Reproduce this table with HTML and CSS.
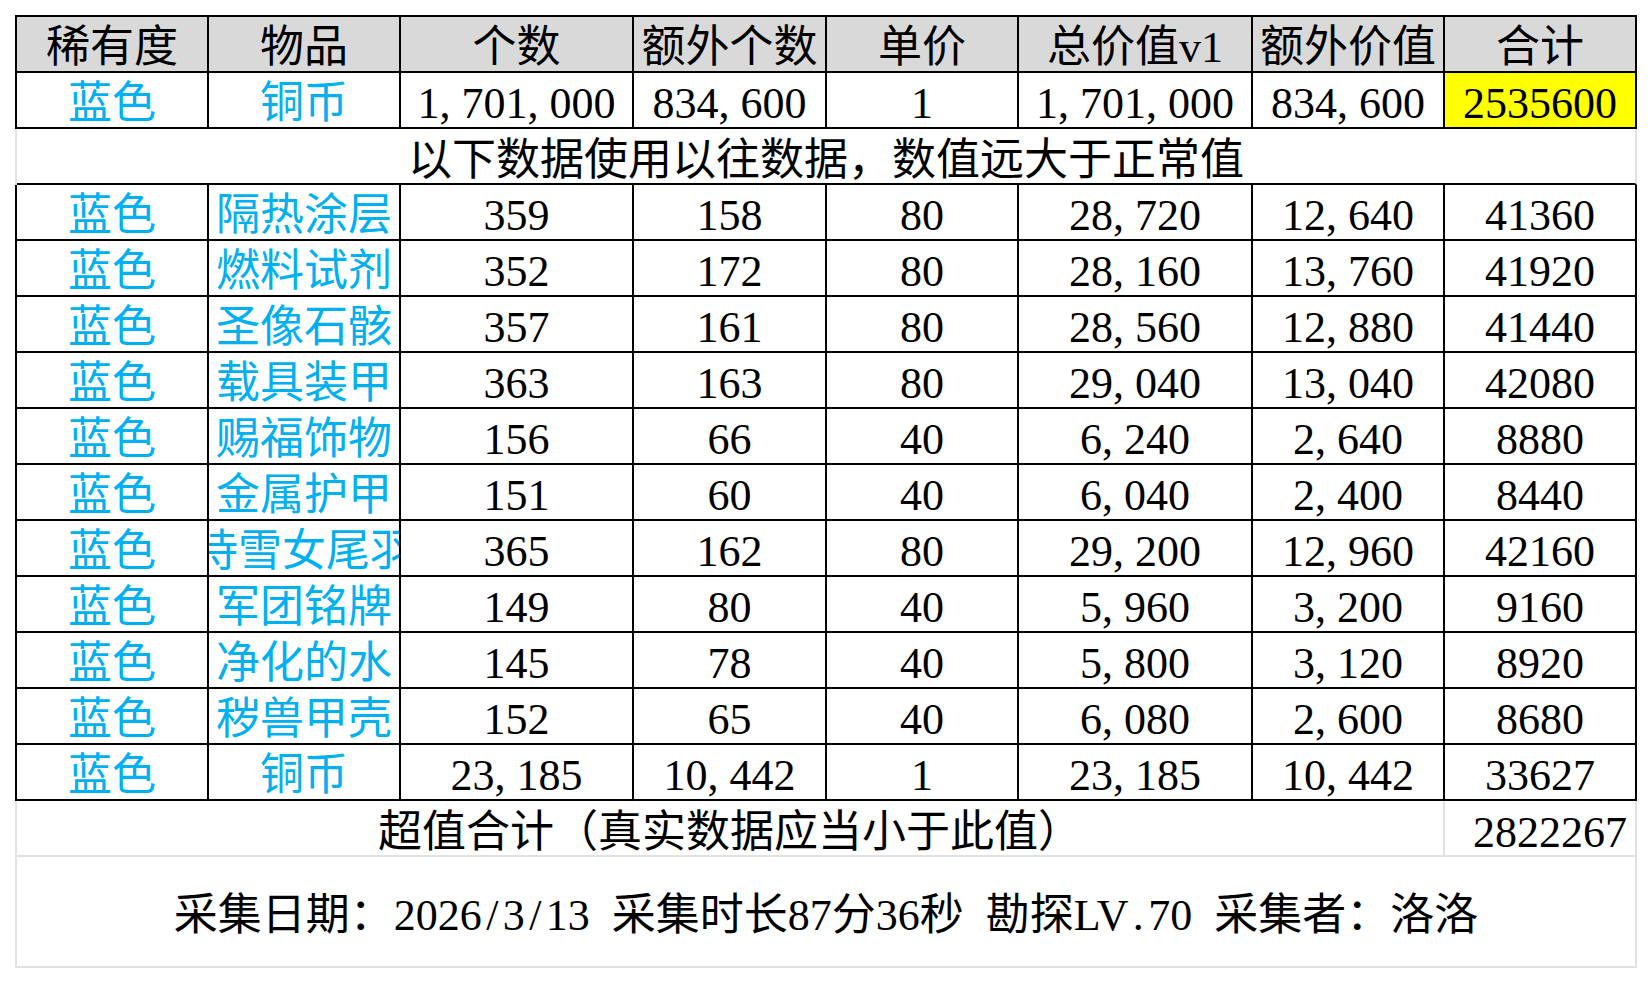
FILE: index.html
```html
<!DOCTYPE html>
<html lang="zh-CN">
<head>
<meta charset="utf-8">
<title>蓝色物品统计</title>
<link rel="stylesheet" href="styles.css">
</head>
<body>
<div class="sheet">
  <div class="row head">
    <div class="cell">稀有度</div>
    <div class="cell">物品</div>
    <div class="cell">个数</div>
    <div class="cell">额外个数</div>
    <div class="cell">单价</div>
    <div class="cell">总价值v1</div>
    <div class="cell">额外价值</div>
    <div class="cell">合计</div>
  </div>
  <div class="row">
    <div class="cell blue">蓝色</div>
    <div class="cell blue">铜币</div>
    <div class="cell">1<span class="c">,</span>701<span class="c">,</span>000</div>
    <div class="cell">834<span class="c">,</span>600</div>
    <div class="cell">1</div>
    <div class="cell">1<span class="c">,</span>701<span class="c">,</span>000</div>
    <div class="cell">834<span class="c">,</span>600</div>
    <div class="cell hl">2535600</div>
  </div>
  <div class="row note">
    <div class="cell all">以下数据使用以往数据，数值远大于正常值</div>
  </div>
  <div class="row">
    <div class="cell blue">蓝色</div><div class="cell blue">隔热涂层</div>
    <div class="cell">359</div><div class="cell">158</div><div class="cell">80</div>
    <div class="cell">28<span class="c">,</span>720</div><div class="cell">12<span class="c">,</span>640</div><div class="cell">41360</div>
  </div>
  <div class="row">
    <div class="cell blue">蓝色</div><div class="cell blue">燃料试剂</div>
    <div class="cell">352</div><div class="cell">172</div><div class="cell">80</div>
    <div class="cell">28<span class="c">,</span>160</div><div class="cell">13<span class="c">,</span>760</div><div class="cell">41920</div>
  </div>
  <div class="row">
    <div class="cell blue">蓝色</div><div class="cell blue">圣像石骸</div>
    <div class="cell">357</div><div class="cell">161</div><div class="cell">80</div>
    <div class="cell">28<span class="c">,</span>560</div><div class="cell">12<span class="c">,</span>880</div><div class="cell">41440</div>
  </div>
  <div class="row">
    <div class="cell blue">蓝色</div><div class="cell blue">载具装甲</div>
    <div class="cell">363</div><div class="cell">163</div><div class="cell">80</div>
    <div class="cell">29<span class="c">,</span>040</div><div class="cell">13<span class="c">,</span>040</div><div class="cell">42080</div>
  </div>
  <div class="row">
    <div class="cell blue">蓝色</div><div class="cell blue">赐福饰物</div>
    <div class="cell">156</div><div class="cell">66</div><div class="cell">40</div>
    <div class="cell">6<span class="c">,</span>240</div><div class="cell">2<span class="c">,</span>640</div><div class="cell">8880</div>
  </div>
  <div class="row">
    <div class="cell blue">蓝色</div><div class="cell blue">金属护甲</div>
    <div class="cell">151</div><div class="cell">60</div><div class="cell">40</div>
    <div class="cell">6<span class="c">,</span>040</div><div class="cell">2<span class="c">,</span>400</div><div class="cell">8440</div>
  </div>
  <div class="row">
    <div class="cell blue">蓝色</div><div class="cell blue">侍雪女尾羽</div>
    <div class="cell">365</div><div class="cell">162</div><div class="cell">80</div>
    <div class="cell">29<span class="c">,</span>200</div><div class="cell">12<span class="c">,</span>960</div><div class="cell">42160</div>
  </div>
  <div class="row">
    <div class="cell blue">蓝色</div><div class="cell blue">军团铭牌</div>
    <div class="cell">149</div><div class="cell">80</div><div class="cell">40</div>
    <div class="cell">5<span class="c">,</span>960</div><div class="cell">3<span class="c">,</span>200</div><div class="cell">9160</div>
  </div>
  <div class="row">
    <div class="cell blue">蓝色</div><div class="cell blue">净化的水</div>
    <div class="cell">145</div><div class="cell">78</div><div class="cell">40</div>
    <div class="cell">5<span class="c">,</span>800</div><div class="cell">3<span class="c">,</span>120</div><div class="cell">8920</div>
  </div>
  <div class="row">
    <div class="cell blue">蓝色</div><div class="cell blue">秽兽甲壳</div>
    <div class="cell">152</div><div class="cell">65</div><div class="cell">40</div>
    <div class="cell">6<span class="c">,</span>080</div><div class="cell">2<span class="c">,</span>600</div><div class="cell">8680</div>
  </div>
  <div class="row">
    <div class="cell blue">蓝色</div><div class="cell blue">铜币</div>
    <div class="cell">23<span class="c">,</span>185</div><div class="cell">10<span class="c">,</span>442</div><div class="cell">1</div>
    <div class="cell">23<span class="c">,</span>185</div><div class="cell">10<span class="c">,</span>442</div><div class="cell">33627</div>
  </div>
  <div class="row summary">
    <div class="cell label">超值合计（真实数据应当小于此值）</div>
    <div class="cell value">2822267</div>
  </div>
  <div class="footer">采集日期：2026<span class="s">/</span>3<span class="s">/</span>13 采集时长87分36秒 勘探LV<span class="s">.</span>70 采集者：洛洛</div>
</div>
</body>
</html>
```

FILE: styles.css
```css
html, body {
  margin: 0;
  background: #ffffff;
}

body {
  padding: 15px 0 0 15px;
  font-family: "Liberation Serif", "Noto Sans CJK SC", serif;
  font-size: 44px;
  color: #000000;
}

.sheet {
  width: 1622px;
  border-top: 2px solid #000000;
}

.row {
  display: grid;
  grid-template-columns: 192px 192px 233px 193px 192px 234px 192px 192px;
  height: 56px;
  border-left: 2px solid #000000;
}

.cell {
  box-sizing: border-box;
  display: flex;
  align-items: center;
  justify-content: center;
  overflow: hidden;
  white-space: nowrap;
  line-height: 1;
  padding-top: 7px;
  border-right: 2px solid #000000;
  border-bottom: 2px solid #000000;
}

.head .cell {
  background: #d9d9d9;
}

.blue {
  color: #00b0f0;
}

.hl {
  background: #ffff00;
}

.c {
  margin-right: 0.25em;
}

.note {
  border-left-color: #e2e2e2;
}

.note .all {
  grid-column: 1 / -1;
  padding-top: 10px;
  border-right-color: #e2e2e2;
}

.summary {
  border-left-color: #e2e2e2;
}

.summary .cell {
  padding-top: 9px;
  border-right-color: #e2e2e2;
  border-bottom-color: #e2e2e2;
}

.summary .label {
  grid-column: 1 / 8;
}

.summary .value {
  justify-content: flex-end;
  padding-right: 8px;
}

.footer {
  box-sizing: border-box;
  height: 111px;
  display: flex;
  align-items: center;
  justify-content: center;
  padding-top: 9px;
  white-space: nowrap;
  line-height: 1;
  word-spacing: 0.25em;
  border-left: 2px solid #e2e2e2;
  border-right: 2px solid #e2e2e2;
  border-bottom: 2px solid #e2e2e2;
}

.s {
  padding: 0 0.1em;
}
```
